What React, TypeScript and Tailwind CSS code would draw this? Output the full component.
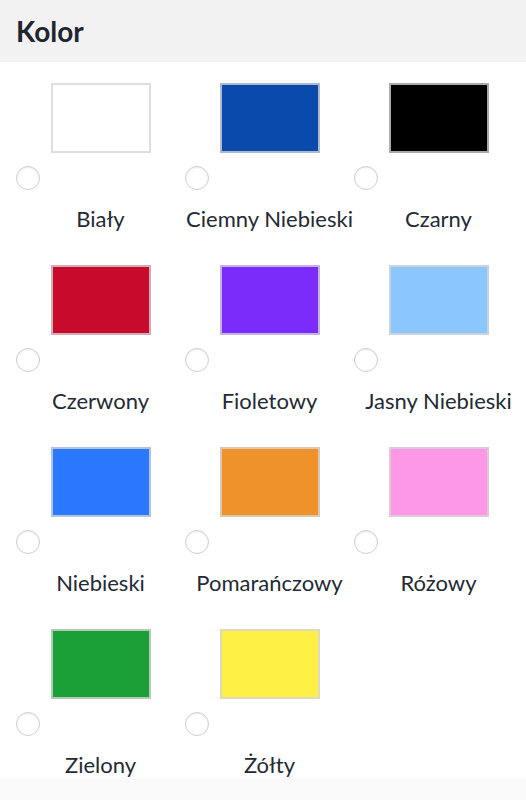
import React from "react";

const colors: { name: string; bg: string }[] = [
  { name: "Biały", bg: "bg-[#ffffff]" },
  { name: "Ciemny Niebieski", bg: "bg-[#0a4aad]" },
  { name: "Czarny", bg: "bg-[#000000]" },
  { name: "Czerwony", bg: "bg-[#c80a2d]" },
  { name: "Fioletowy", bg: "bg-[#7b2cfb]" },
  { name: "Jasny Niebieski", bg: "bg-[#8cc6ff]" },
  { name: "Niebieski", bg: "bg-[#2a78fe]" },
  { name: "Pomarańczowy", bg: "bg-[#f0922a]" },
  { name: "Różowy", bg: "bg-[#fd98e6]" },
  { name: "Zielony", bg: "bg-[#1aa037]" },
  { name: "Żółty", bg: "bg-[#fef044]" },
];

export default function App() {
  return (
    <div className="min-h-screen w-[526px] bg-[#fafafa]" style={{ fontFamily: "Lato, 'Noto Sans', sans-serif" }}>
      <div className="h-[62px] bg-[#f2f2f2] px-4 flex items-center">
        <h2 className="text-[28px] font-bold text-[#1f2630] leading-none">Kolor</h2>
      </div>
      <div className="bg-white pl-4 pt-[21px]">
        <div className="grid grid-cols-[169px_169px_169px] gap-y-[33px]">
          {colors.map((c) => (
            <label key={c.name} className="flex flex-col">
              <div
                className={`mx-auto h-[70px] w-[100px] border-2 border-[rgba(214,214,214,0.8)] ${c.bg}`}
              />
              <div className="mt-[13px] h-6 w-6 rounded-full border border-[#cfcfcf] bg-white shadow-[inset_0_1px_2px_rgba(0,0,0,0.08)]" />
              <div className="mt-[16px] text-center text-[22px] leading-[26px] text-[#232a33] whitespace-nowrap">
                {c.name}
              </div>
            </label>
          ))}
        </div>
      </div>
    </div>
  );
}
